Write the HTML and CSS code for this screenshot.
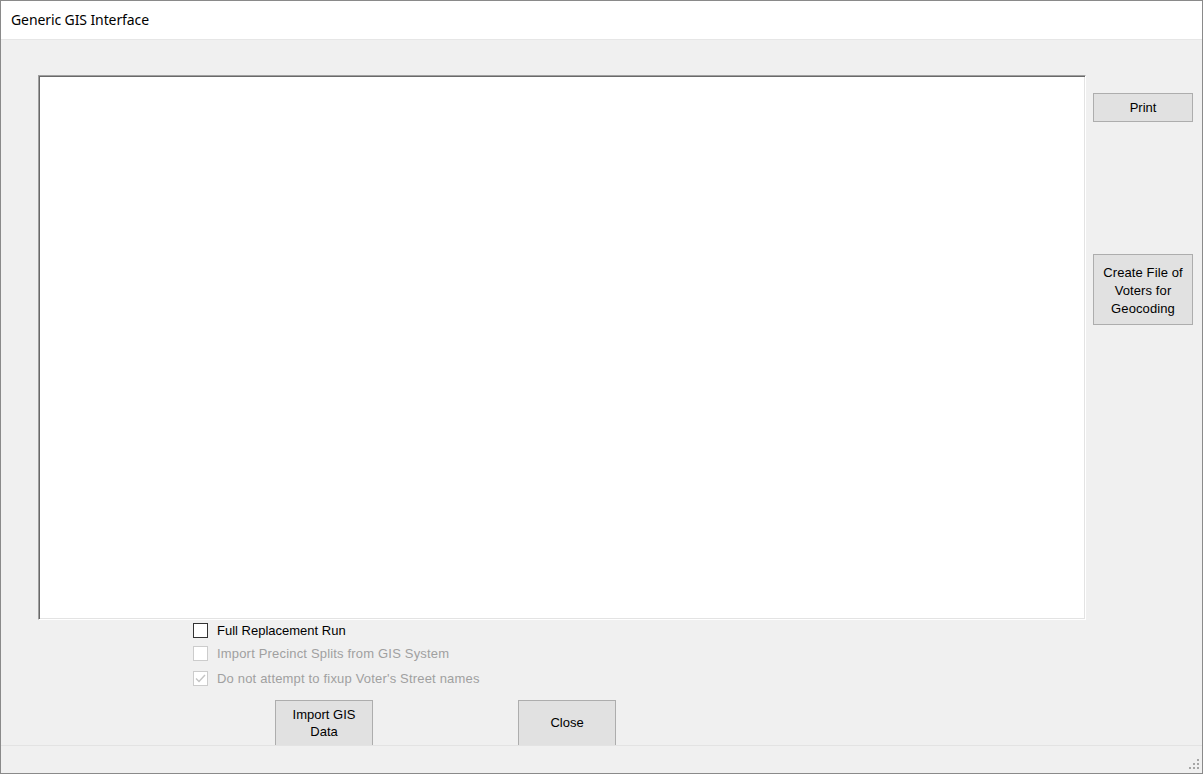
FILE: index.html
```html
<!DOCTYPE html>
<html>
<head>
<meta charset="utf-8">
<title>Generic GIS Interface</title>
<link rel="stylesheet" href="styles.css">
</head>
<body>
<div class="window">
  <div class="titlebar">Generic GIS Interface</div>
  <div class="content">
    <div class="top-row">
      <div class="panel"></div>
      <div class="side">
        <button class="btn btn-print">Print</button>
        <button class="btn btn-create">Create File of<br>Voters for<br>Geocoding</button>
      </div>
    </div>
    <div class="options">
      <div class="opt opt-1">
        <span class="box"></span>
        <span class="label">Full Replacement Run</span>
      </div>
      <div class="opt opt-2 disabled">
        <span class="box"></span>
        <span class="label">Import Precinct Splits from GIS System</span>
      </div>
      <div class="opt opt-3 disabled">
        <span class="box"><svg width="13" height="13" viewBox="0 0 13 13"><path d="M2 6.5 L5 9.5 L11 3" fill="none" stroke="#c4c4c4" stroke-width="1.4"/></svg></span>
        <span class="label">Do not attempt to fixup Voter's Street names</span>
      </div>
    </div>
    <div class="actions">
      <button class="btn btn-import">Import GIS<br>Data</button>
      <button class="btn btn-close">Close</button>
    </div>
  </div>
  <div class="statusbar">
    <svg class="grip" width="12" height="12" viewBox="0 0 12 12">
      <rect x="9" y="0" width="2" height="2" fill="#a6a6a6"/>
      <rect x="5" y="4" width="2" height="2" fill="#a6a6a6"/>
      <rect x="9" y="4" width="2" height="2" fill="#a6a6a6"/>
      <rect x="1" y="8" width="2" height="2" fill="#a6a6a6"/>
      <rect x="5" y="8" width="2" height="2" fill="#a6a6a6"/>
      <rect x="9" y="8" width="2" height="2" fill="#a6a6a6"/>
    </svg>
  </div>
</div>
</body>
</html>
```
FILE: styles.css
```css
html, body {
  margin: 0;
  padding: 0;
  background: #f0f0f0;
}

.window {
  width: 1203px;
  height: 774px;
  box-sizing: border-box;
  border: 1px solid #8a8a8a;
  display: flex;
  flex-direction: column;
  background: #f0f0f0;
  font-family: "Liberation Sans", Arial, sans-serif;
  font-size: 13px;
  color: #000;
}

.titlebar {
  height: 38px;
  flex: none;
  background: #fff;
  border-bottom: 1px solid #e6e6e6;
  padding-left: 10px;
  font-family: "Noto Sans", "Open Sans", sans-serif;
  font-size: 14px;
  line-height: 38px;
  letter-spacing: -0.1px;
  color: #000;
}

.content {
  flex: 1;
  overflow: hidden;
  padding: 35px 0 0 37px;
  box-sizing: border-box;
}

.top-row {
  display: flex;
  align-items: flex-start;
}

.panel {
  width: 1048px;
  height: 545px;
  box-sizing: border-box;
  background: #fff;
  border: 1px solid;
  border-color: #a0a0a0 #ffffff #ffffff #a0a0a0;
  box-shadow: inset 1px 1px 0 #696969, inset -1px -1px 0 #e3e3e3;
}

.side {
  margin-left: 7px;
  width: 100px;
  display: flex;
  flex-direction: column;
}

.btn {
  box-sizing: border-box;
  background: #e1e1e1;
  border: 1px solid #adadad;
  font-family: "Liberation Sans", Arial, sans-serif;
  font-size: 13px;
  color: #000;
  padding: 0;
  margin: 0;
  text-align: center;
}

.btn-print {
  margin-top: 18px;
  height: 29px;
  width: 100px;
}

.btn-create {
  margin-top: 132px;
  height: 71px;
  width: 100px;
  line-height: 18px;
  padding-top: 2px;
  letter-spacing: 0.1px;
}

.options {
  margin-left: 155px;
  margin-top: 3px;
  display: flex;
  flex-direction: column;
}

.opt {
  display: flex;
  align-items: center;
  height: 15px;
}

.opt-1 { margin-bottom: 8px; }
.opt-2 { margin-bottom: 10px; }

.box {
  width: 15px;
  height: 15px;
  box-sizing: border-box;
  border: 1px solid #333;
  background: #fff;
  display: flex;
  align-items: center;
  justify-content: center;
  flex: none;
}

.label {
  margin-left: 9px;
  white-space: nowrap;
}

.disabled .box {
  border-color: #cccccc;
  background: #fff;
}

.disabled .label {
  color: #a0a0a0;
  letter-spacing: 0.18px;
}

.actions {
  display: flex;
  margin-left: 237px;
  margin-top: 14px;
}

.btn-import {
  width: 98px;
  height: 46px;
  line-height: 17px;
  padding-bottom: 0;
}

.btn-close {
  width: 98px;
  height: 46px;
  margin-left: 145px;
  padding-bottom: 2px;
}

.statusbar {
  flex: none;
  height: 27px;
  border-top: 1px solid #e3e3e3;
  background: #f0f0f0;
  position: relative;
}

.grip {
  position: absolute;
  right: 2px;
  bottom: 2px;
}
```
